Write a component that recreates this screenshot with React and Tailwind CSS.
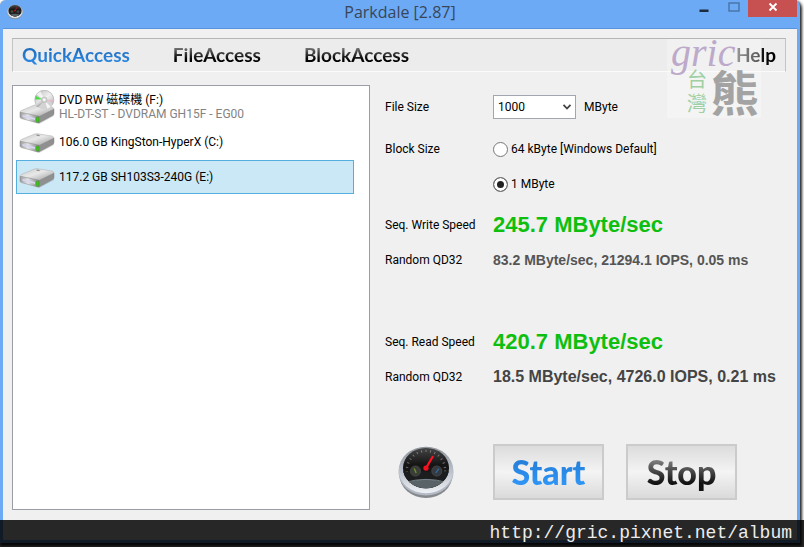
import { useState } from 'react';
import clsx from 'clsx';

const UI_FONT = "font-['Roboto','Noto_Sans_CJK_TC',sans-serif]";

const TABS = ['QuickAccess', 'FileAccess', 'BlockAccess'];

const DRIVES = [
  { id: 'F', name: 'DVD RW 磁碟機 (F:)', detail: 'HL-DT-ST - DVDRAM GH15F - EG00', optical: true },
  { id: 'C', name: '106.0 GB KingSton-HyperX (C:)' },
  { id: 'E', name: '117.2 GB SH103S3-240G (E:)' },
];

// Hard disk, with a disc standing behind it for optical drives
const DriveIcon = ({ optical }) => (
  <svg
    viewBox={optical ? '0 0 36 34' : '0 13 36 21'}
    className={clsx('w-9 shrink-0', optical ? 'h-[34px]' : 'h-[21px]')}
    aria-hidden="true"
  >
    <defs>
      <linearGradient id="driveTop" x1="0" y1="0" x2="1" y2="1">
        <stop offset="0" stopColor="#c6c6c6" />
        <stop offset="0.45" stopColor="#e8e8e8" />
        <stop offset="1" stopColor="#9a9a9a" />
      </linearGradient>
      <linearGradient id="driveFront" x1="0" y1="0" x2="1" y2="0">
        <stop offset="0" stopColor="#9a9a9a" />
        <stop offset="0.4" stopColor="#e4e4ea" />
        <stop offset="1" stopColor="#7e7e7e" />
      </linearGradient>
      <linearGradient id="discFace" x1="0" y1="0" x2="1" y2="1">
        <stop offset="0" stopColor="#b9b9b9" />
        <stop offset="0.5" stopColor="#efefef" />
        <stop offset="1" stopColor="#ababab" />
      </linearGradient>
    </defs>
    {optical && (
      <g>
        <circle cx="25.3" cy="9.8" r="9.5" fill="url(#discFace)" stroke="#a0a0a0" strokeWidth="0.6" />
        <path d="M25.3 9.8 L17.6 4.6 A9.4 9.4 0 0 1 21.5 1.4 Z" fill="#fff" opacity="0.7" />
        <path d="M23.4 9.3 L16.6 5.8 L16 9.4 Z" fill="#4edc4e" />
        <path d="M26.6 10.2 L34.5 9.5 L33.9 12.3 Z" fill="#e6b3c6" opacity="0.8" />
      </g>
    )}
    <path d="M3 28 L20 33.5 L35 23 L35 26 L20 34 Z" fill="#000" opacity="0.15" />
    <path d="M1 22.3 Q1 21 3 20.2 L15.5 15 Q17 14.4 19 14.8 L33 17 Q35 17.6 35 19.4 L20.5 26.3 Z" fill="url(#driveTop)" stroke="#aeaeae" strokeWidth="0.5" />
    <path d="M1 22.3 L20.5 26.3 L20.5 32.8 Q20 33.2 18.6 32.9 L2.5 28.6 Q1 28.2 1 26.8 Z" fill="url(#driveFront)" stroke="#8a8a8a" strokeWidth="0.5" />
    <path d="M20.5 26.3 L35 19.2 L35 23.6 Q35 24.7 33.6 25.4 L20.5 32.8 Z" fill="#909090" stroke="#7b7b7b" strokeWidth="0.4" />
    <path d="M3.5 25 L16 28 L16 30 L3.5 26.8 Z" fill="#d7d7f0" />
    <rect x="17.1" y="27.2" width="2.8" height="4.8" rx="0.8" fill="#3fc51a" stroke="#2b9416" strokeWidth="0.4" />
    <path d="M17.5 16 L20.5 16.6" stroke="#888" strokeWidth="1.2" />
    {optical && (
      <g>
        <path d="M16.8 14 A9.4 9.4 0 0 0 33.6 14.3 L28 10 L23 10 Z" fill="#d3d3d3" />
        <path d="M26 11 L31.6 16.8 L28.4 18.6 Z" fill="#fff" opacity="0.8" />
        <path d="M24.4 11.5 L19.5 17 L18 15.5 Z" fill="#b2b2b2" />
        <circle cx="25.3" cy="9.8" r="2.8" fill="#d2d2d2" stroke="#aaa" strokeWidth="0.5" />
        <circle cx="25.3" cy="9.8" r="1.2" fill="#fff" />
      </g>
    )}
  </svg>
);

const GaugeIcon = ({ className }) => (
  <svg viewBox="0 0 58 54" className={className} aria-hidden="true">
    <defs>
      <linearGradient id="gaugeRim" x1="0" y1="0" x2="0" y2="1">
        <stop offset="0" stopColor="#8f949b" />
        <stop offset="0.5" stopColor="#b9bfc9" />
        <stop offset="1" stopColor="#eef1f5" />
      </linearGradient>
      <linearGradient id="gaugeFace" x1="0" y1="0" x2="0" y2="1">
        <stop offset="0" stopColor="#4a4a4a" />
        <stop offset="0.35" stopColor="#151515" />
        <stop offset="1" stopColor="#1d1f20" />
      </linearGradient>
      <clipPath id="gaugeClip">
        <ellipse cx="29" cy="22.5" rx="23.5" ry="20.5" />
      </clipPath>
    </defs>
    <ellipse cx="29" cy="29.5" rx="27" ry="23.5" fill="#85888d" />
    <ellipse cx="29" cy="27" rx="28" ry="23.5" fill="#b4bac4" />
    <ellipse cx="29" cy="24.5" rx="27.8" ry="23.7" fill="url(#gaugeRim)" />
    <g clipPath="url(#gaugeClip)">
      <rect width="58" height="54" fill="url(#gaugeFace)" />
      <ellipse cx="29" cy="25" rx="19.5" ry="20" fill="none" stroke="#b4b4b4" strokeWidth="2.4" strokeDasharray="1 3.6" opacity="0.55" />
      <rect y="26" width="58" height="27" fill="#1c1d1e" />
      <ellipse cx="29" cy="43" rx="23" ry="9" fill="#596266" />
      <path d="M8 37 Q29 31 50 37" fill="none" stroke="#89959a" strokeWidth="0.8" />
    </g>
    <circle cx="18.3" cy="25.5" r="5.2" fill="#3a3d38" stroke="#484848" strokeWidth="0.8" />
    <circle cx="40" cy="25.5" r="5.2" fill="#363a3f" stroke="#484848" strokeWidth="0.8" />
    <path d="M19 27.5 L17 23" stroke="#6c9a27" strokeWidth="1.3" />
    <path d="M39 27.5 L42 23" stroke="#2e6ea6" strokeWidth="1.3" />
    <path d="M29 22.5 L35.8 11" stroke="#ff1324" strokeWidth="2.2" strokeLinecap="round" />
    <circle cx="29" cy="22.5" r="2.7" fill="#f4101d" />
  </svg>
);

const TitleBar = () => (
  <header className="relative flex h-7 items-start justify-between">
    <GaugeIcon className="mt-1 ml-1 h-4 w-4" />
    <h1 className="absolute inset-x-0 top-0 text-center font-['Open_Sans',sans-serif] text-base leading-6 text-[#3a4658]">
      Parkdale [2.87]
    </h1>
    <div className="relative flex">
      <button type="button" aria-label="Minimize" className="flex h-[17px] w-8 items-center justify-center">
        <svg viewBox="0 0 10 10" className="h-2.5 w-2.5" aria-hidden="true">
          <rect x="0.5" y="5.5" width="9" height="2.5" fill="#1c2a3d" />
        </svg>
      </button>
      <button type="button" aria-label="Maximize" className="flex h-[17px] w-7 items-start justify-center pt-0.5">
        <svg viewBox="0 0 12 10" className="h-2.5 w-3" aria-hidden="true">
          <rect x="1" y="1" width="10" height="8" fill="none" stroke="#466f9f" strokeWidth="1.3" />
        </svg>
      </button>
      <button type="button" aria-label="Close" className="flex h-[17px] w-[49px] items-center justify-center bg-[#c75050]">
        <svg viewBox="0 0 10 10" className="mb-1 h-2.5 w-2.5" aria-hidden="true">
          <path d="M1.5 1.5 L8.5 8.5 M8.5 1.5 L1.5 8.5" stroke="#fff" strokeWidth="1.9" />
        </svg>
      </button>
    </div>
  </header>
);

const Watermark = () => (
  <div className="pointer-events-none absolute top-0 right-6 h-[79px] w-[94px] bg-white/25">
    <span className="absolute top-0.5 left-1 font-['Liberation_Serif',serif] text-[40px] leading-6 font-normal text-[#bda9c9] italic">
      gric
    </span>
    <span className="absolute top-7 left-5 w-5 font-['Noto_Sans_CJK_TC',sans-serif] text-xl leading-6 font-normal text-[#9fd0a4]">
      台灣
    </span>
    <span className="absolute top-[26px] left-11 font-['Noto_Sans_CJK_TC',sans-serif] text-5xl leading-[50px] font-bold text-[#a3a3a3]">
      熊
    </span>
  </div>
);

const ResultRow = ({ label, value, className }) => (
  <div className={clsx('flex items-center', className)}>
    <span className="w-[108px] shrink-0 text-xs">{label}</span>
    <output className="whitespace-nowrap">{value}</output>
  </div>
);

export default function App() {
  const [tab, setTab] = useState('QuickAccess');
  const [drive, setDrive] = useState('E');
  const [fileSize, setFileSize] = useState('1000');
  const [blockSize, setBlockSize] = useState('1m');

  return (
    <div className={clsx('relative flex min-h-screen flex-col overflow-hidden bg-white pr-1 pb-1 text-black', UI_FONT)}>
      <div className="flex grow flex-col rounded-t-md bg-[#6caaf5] px-[3px] pb-[3px] shadow-[1px_2px_3px_1px_#222]">
        <TitleBar />

        <main className="flex grow flex-col border-t border-[#5793dc] bg-[#f0f0f0] px-[9px] pt-[9px] pb-[30px]">
          {/* Menu bar */}
          <nav className="relative mr-0.5 flex h-[34px] items-center border border-[#fafafa] border-t-[#b5b5b5] border-r-[#c4c4c4] border-l-[#c4c4c4] bg-[#ececec] px-[9px] font-['Lato',sans-serif] text-[19px] leading-6 font-bold">
            {TABS.map((name) => (
              <button
                key={name}
                type="button"
                onClick={() => setTab(name)}
                className={clsx(
                  'mr-[43px] bg-linear-to-b bg-clip-text text-transparent',
                  tab === name ? 'from-[#1b62ae] to-[#2f90ee]' : 'from-[#777] from-20% to-black to-80%'
                )}
              >
                {name}
              </button>
            ))}
            <button type="button" className="ml-auto bg-linear-to-r from-[#777] to-black bg-clip-text text-transparent">
              Help
            </button>
            <Watermark />
          </nav>

          <div className="mt-[13px] flex grow">
            {/* Drive list */}
            <ul className="w-[358px] shrink-0 border border-[#9a9da6] bg-white p-[3px]">
              {DRIVES.map((d) => (
                <li key={d.id}>
                  <button
                    type="button"
                    onClick={() => setDrive(d.id)}
                    className={clsx(
                      'flex w-[338px] items-center gap-1 border px-0.5 text-left text-xs leading-[14px]',
                      d.optical ? 'h-[35px]' : 'my-px h-[34px]',
                      drive === d.id ? 'border-[#55aee0] bg-[#cbe8f6]' : 'border-transparent'
                    )}
                  >
                    <DriveIcon optical={d.optical} />
                    <span>
                      {d.name}
                      {d.detail && <span className="block text-[#838383]">{d.detail}</span>}
                    </span>
                  </button>
                </li>
              ))}
            </ul>

            {/* Settings and results */}
            <section className="min-w-0 grow pt-2.5 pl-[15px] text-xs">
              <div className="flex h-6 items-center">
                <label htmlFor="fileSize" className="w-[108px]">File Size</label>
                <span className="relative">
                  <select
                    id="fileSize"
                    value={fileSize}
                    onChange={(e) => setFileSize(e.target.value)}
                    className="h-6 w-[83px] appearance-none border border-[#a3a6b0] bg-white px-1"
                  >
                    <option>100</option>
                    <option>1000</option>
                    <option>4000</option>
                  </select>
                  <svg viewBox="0 0 10 8" className="pointer-events-none absolute top-2 right-1 h-2 w-2.5" aria-hidden="true">
                    <path d="M1.5 1.8 L5 5.5 L8.5 1.8" fill="none" stroke="#444" strokeWidth="1.8" />
                  </svg>
                </span>
                <span className="ml-2">MByte</span>
              </div>

              <fieldset className="mt-[18px] flex">
                <legend className="float-left flex h-6 w-[108px] items-center">Block Size</legend>
                <div className="flex flex-col gap-[11px]">
                  {[
                    ['64k', '64 kByte [Windows Default]'],
                    ['1m', '1 MByte'],
                  ].map(([value, text]) => (
                    <label key={value} className="flex h-6 items-center gap-[3px]">
                      <input
                        type="radio"
                        name="blockSize"
                        checked={blockSize === value}
                        onChange={() => setBlockSize(value)}
                        className="h-[15px] w-[15px] appearance-none rounded-full border border-[#777] bg-white checked:bg-[#222] checked:shadow-[inset_0_0_0_3px_#fff]"
                      />
                      {text}
                    </label>
                  ))}
                </div>
              </fieldset>

              <ResultRow
                label="Seq. Write Speed"
                value={<b className="font-['Liberation_Sans',sans-serif] text-[22px] text-[#0fbf0f]">245.7 MByte/sec</b>}
                className="mt-[15px] h-7"
              />
              <ResultRow
                label="Random QD32"
                value={<b className="font-['Liberation_Sans',sans-serif] text-sm text-[#555]">83.2 MByte/sec, 21294.1 IOPS, 0.05 ms</b>}
                className="mt-[9px] h-6"
              />
              <ResultRow
                label="Seq. Read Speed"
                value={<b className="font-['Liberation_Sans',sans-serif] text-[22px] text-[#0fbf0f]">420.7 MByte/sec</b>}
                className="mt-14 h-7"
              />
              <ResultRow
                label="Random QD32"
                value={<b className="font-['Liberation_Sans',sans-serif] text-base text-[#444]">18.5 MByte/sec, 4726.0 IOPS, 0.21 ms</b>}
                className="mt-[9px] h-6"
              />

              <div className="mt-[55px] flex items-center font-['Lato',sans-serif] text-[34px] font-black">
                <span className="w-[108px] pl-3">
                  <GaugeIcon className="h-[53px] w-[58px]" />
                </span>
                <button type="button" className="h-14 w-[111px] border-2 border-[#cbcbcb] bg-linear-to-b from-[#dcdcdc] via-[#f4f4f4] to-[#dadada]">
                  <span className="bg-linear-to-b from-[#2077ce] to-[#329cff] bg-clip-text leading-[50px] text-transparent">Start</span>
                </button>
                <button type="button" className="ml-[22px] h-14 w-[111px] border-2 border-[#cbcbcb] bg-linear-to-b from-[#dcdcdc] via-[#f4f4f4] to-[#dadada]">
                  <span className="bg-linear-to-b from-[#858585] from-20% to-[#111] to-80% bg-clip-text leading-[50px] text-transparent">Stop</span>
                </button>
              </div>
            </section>
          </div>
        </main>
      </div>

      {/* Address strip over the bottom of the window */}
      <footer className="absolute inset-x-0 bottom-0 h-[27px] bg-black/84 pr-3 text-right font-['Liberation_Mono',monospace] text-lg leading-[26px] text-[#ededed]">
        <a href="http://gric.pixnet.net/album">http://gric.pixnet.net/album</a>
      </footer>
    </div>
  );
}
